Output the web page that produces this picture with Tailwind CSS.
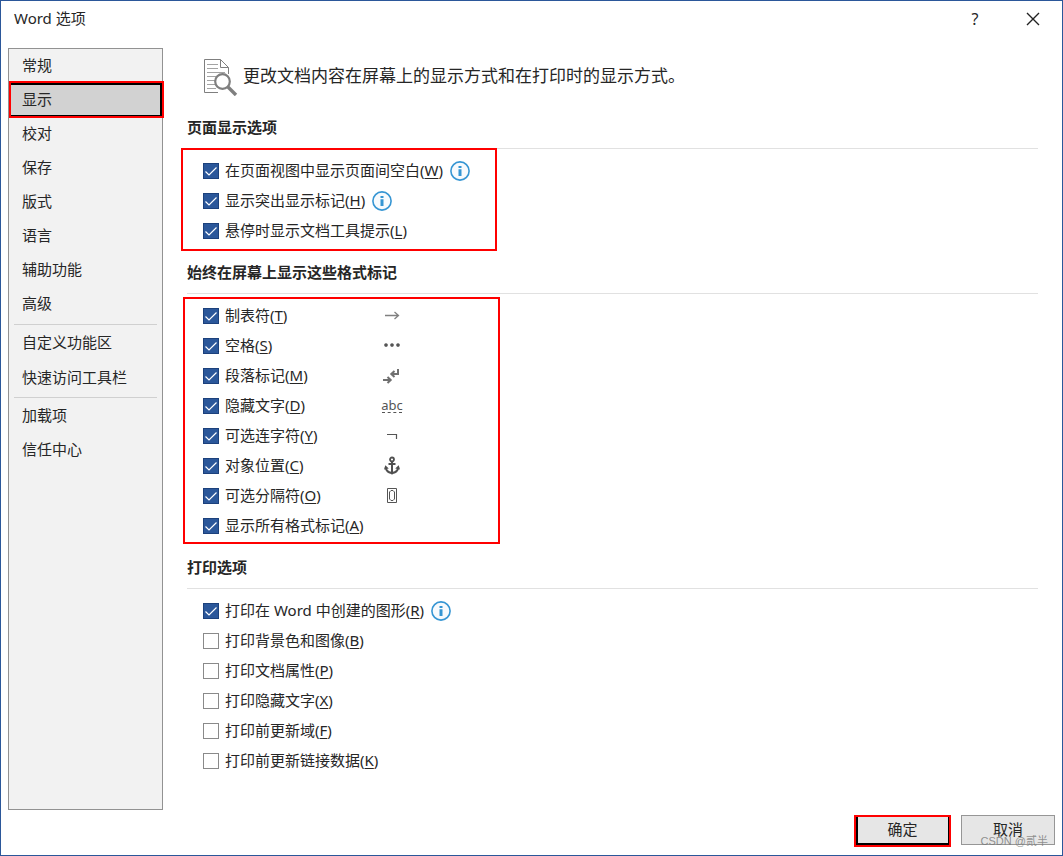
<!DOCTYPE html>
<html lang="zh-CN">

<head>
    <meta charset="UTF-8" />
    <meta name="viewport" content="width=device-width, initial-scale=1.0" />
    <title>Word 选项</title>
    <script src="https://cdn.jsdelivr.net/npm/@tailwindcss/browser@4"></script>
</head>

<body class="min-h-screen flex flex-col bg-white border border-[#2b579a] text-[#262626] text-[15px] leading-5 font-['Noto_Sans','Noto_Sans_CJK_SC',sans-serif]">

    <!-- Shared icons -->
    <svg class="hidden">
        <symbol id="tick" viewBox="0 0 16 16">
            <path d="M2.5 8.5 6 12 13.5 4.5" fill="none" stroke="#fff" stroke-width="1.2" />
        </symbol>
        <symbol id="info" viewBox="0 0 20 20">
            <circle cx="10" cy="10" r="9.1" fill="#f7fafd" stroke="#3595d3" stroke-width="1.6" />
            <path d="M8.5 5h3v2h-3zM8.5 8.2h3V15h-3z" fill="#3595d3" />
        </symbol>
        <symbol id="mark-tab" viewBox="0 0 20 20">
            <path d="M3 9.5h13.5M12.5 6l4 3.5-4 3.5" fill="none" stroke="#808080" stroke-width="1.3" />
        </symbol>
        <symbol id="mark-space" viewBox="0 0 20 20">
            <path d="M4 7.2a1.8 1.8 0 1 0 .01 0zM10 7.2a1.8 1.8 0 1 0 .01 0zM16 7.2a1.8 1.8 0 1 0 .01 0z" fill="#555" />
        </symbol>
        <symbol id="mark-paragraph" viewBox="0 0 20 20">
            <path d="M16 3v5H9.5M12.5 5 9.3 8l3.200 3M1 14h7.500M5.500 11l3.200 3-3.200 3" fill="none" stroke="#707070" stroke-width="2" />
        </symbol>
        <symbol id="mark-hyphen" viewBox="0 0 20 20">
            <path d="M5 8.5h9.5V13" fill="none" stroke="#555" stroke-width="1.2" />
        </symbol>
        <symbol id="mark-anchor" viewBox="0 0 20 20">
            <circle cx="10" cy="3.500" r="2" fill="none" stroke="#505050" stroke-width="1.800" />
            <path d="M10 5.500V17M6.500 8h7M3.700 11.500c.5 3.200 3 5.300 6.300 5.300s5.800-2.100 6.300-5.300" fill="none" stroke="#505050" stroke-width="2" />
            <path d="M2 13.500 3.300 9.300 6.800 12.600zM18 13.500 16.700 9.300 13.200 12.600zM7 16.200 10 18.800 13 16.200z" fill="#505050" />
        </symbol>
        <symbol id="mark-break" viewBox="0 0 20 20">
            <path d="M5.500 2.500h9v14h-9zM9 4.500h2l1.500 1.500v7L11 14.500H9L7.500 13V6z" fill="none" stroke="#555" />
        </symbol>
    </svg>

    <!-- Title bar -->
    <header class="h-[47px] flex justify-between items-start pl-[13px] pr-[21px] pt-[7px]">
        <h1>Word 选项</h1>
        <div class="flex items-center gap-11">
            <button type="button" aria-label="帮助" class="w-3 text-base leading-5">?</button>
            <button type="button" aria-label="关闭" class="w-4 h-[22px] flex items-center">
                <svg class="w-4 h-4" viewBox="0 0 16 16" fill="none" stroke="#222" stroke-width="1.4">
                    <path d="M2 2 14 14M14 2 2 14" />
                </svg>
            </button>
        </div>
    </header>

    <div class="flex-1 flex pl-[7px] pr-6">

        <!-- Categories -->
        <nav class="w-[155px] shrink-0 bg-[#f2f2f2] border border-[#929292]">
            <ul>
                <li><button type="button" class="w-full h-[34px] pl-[13px] pb-0.5 text-left">常规</button></li>
                <li class="relative">
                    <button type="button" class="w-full h-[34px] pl-[13px] pb-0.5 text-left bg-[#d2d2d2] border-y-2 border-r-2 border-black">显示</button>
                    <span class="absolute -top-0.5 -bottom-px left-0 -right-0.5 border-2 border-[#f00] pointer-events-none"></span>
                </li>
                <li><button type="button" class="w-full h-[34px] pl-[13px] pb-0.5 text-left">校对</button></li>
                <li><button type="button" class="w-full h-[34px] pl-[13px] pb-0.5 text-left">保存</button></li>
                <li><button type="button" class="w-full h-[34px] pl-[13px] pb-0.5 text-left">版式</button></li>
                <li><button type="button" class="w-full h-[34px] pl-[13px] pb-0.5 text-left">语言</button></li>
                <li><button type="button" class="w-full h-[34px] pl-[13px] pb-0.5 text-left">辅助功能</button></li>
                <li><button type="button" class="w-full h-[34px] pl-[13px] pb-0.5 text-left">高级</button></li>
            </ul>
            <hr class="mx-[5px] mt-[3px] border-[#d0d0d0]" />
            <ul>
                <li><button type="button" class="w-full h-[35px] pl-[13px] pb-0.5 text-left">自定义功能区</button></li>
                <li><button type="button" class="w-full h-[34px] pl-[13px] text-left">快速访问工具栏</button></li>
            </ul>
            <hr class="mx-[5px] mt-[3px] border-[#d0d0d0]" />
            <ul>
                <li><button type="button" class="w-full h-[35px] pl-[13px] pb-0.5 text-left">加载项</button></li>
                <li><button type="button" class="w-full h-[34px] pl-[13px] pb-0.5 text-left">信任中心</button></li>
            </ul>
        </nav>

        <!-- Options -->
        <main class="flex-1 pl-6">
            <div class="flex items-center pt-[10px] pl-[17px] gap-1">
                <svg class="w-[35px] h-[38px]" viewBox="0 0 35 38" fill="none">
                    <path d="M14 34.500H.5V1.500h16l8 8V16M16.500 1.500v8h8" stroke="#7f7f7f" />
                    <path d="M3 6.500h11M3 10.500h11M3 14.500h18M3 18.500h9M3 22.500h8M3 26.500h8M3 30.500h9" stroke="#a3a3a3" />
                    <circle cx="18.500" cy="23.500" r="7.300" fill="#fff" stroke="#7f7f7f" stroke-width="2.200" />
                    <path d="m24 29 8 8" stroke="#7f7f7f" stroke-width="3.400" />
                </svg>
                <p class="pb-0.5 text-[17px] leading-6">更改文档内容在屏幕上的显示方式和在打印时的显示方式。</p>
            </div>

            <section class="mt-[21px]">
                <h2 class="h-8 font-bold border-b border-[#e1e1e1]">页面显示选项</h2>
                <ul id="page-options" class="relative w-[316px] -ml-1.5 -mt-px pl-5 pt-1.5 pb-[3px] border-2 border-[#f00]"></ul>
            </section>

            <section class="mt-[11px]">
                <h2 class="h-8 font-bold border-b border-[#e1e1e1]">始终在屏幕上显示这些格式标记</h2>
                <ul id="mark-options" class="w-[317px] -ml-1 mt-[3px] pl-[18px] pt-0.5 pb-px border-2 border-[#f00]"></ul>
            </section>

            <section class="mt-[13px]">
                <h2 class="h-8 font-bold border-b border-[#e1e1e1]">打印选项</h2>
                <ul id="print-options" class="mt-[7px] pl-4"></ul>
            </section>
        </main>
    </div>

    <!-- Buttons -->
    <footer class="relative flex justify-end items-start gap-[10px] pt-[5px] pr-[7px] pb-2">
        <button type="button" class="w-[97px] h-8 pb-1 bg-[#e6e6e6] border-2 border-[#f00] shadow-[inset_2px_-2px_0_#000,inset_-1px_0_0_#000]">确定</button>
        <button type="button" class="w-[94px] h-[30px] pb-0.5 bg-[#e6e6e6] border border-[#969696]">取消</button>
        <span class="absolute right-[14px] bottom-1.5 text-[11px] leading-4 text-[#777]/80 font-['Liberation_Sans','Noto_Sans_CJK_SC',sans-serif] pointer-events-none">CSDN @贰半</span>
    </footer>

    <script>
        const pageOptions = [
            { text: '在页面视图中显示页面间空白', key: 'W', checked: true, info: true },
            { text: '显示突出显示标记', key: 'H', checked: true, info: true },
            { text: '悬停时显示文档工具提示', key: 'L', checked: true },
        ];

        const markOptions = [
            { text: '制表符', key: 'T', checked: true, icon: 'mark-tab' },
            { text: '空格', key: 'S', checked: true, icon: 'mark-space' },
            { text: '段落标记', key: 'M', checked: true, icon: 'mark-paragraph' },
            { text: '隐藏文字', key: 'D', checked: true, sample: 'abc' },
            { text: '可选连字符', key: 'Y', checked: true, icon: 'mark-hyphen' },
            { text: '对象位置', key: 'C', checked: true, icon: 'mark-anchor' },
            { text: '可选分隔符', key: 'O', checked: true, icon: 'mark-break' },
            { text: '显示所有格式标记', key: 'A', checked: true },
        ];

        const printOptions = [
            { text: '打印在 Word 中创建的图形', key: 'R', checked: true, info: true },
            { text: '打印背景色和图像', key: 'B' },
            { text: '打印文档属性', key: 'P' },
            { text: '打印隐藏文字', key: 'X' },
            { text: '打印前更新域', key: 'F' },
            { text: '打印前更新链接数据', key: 'K' },
        ];

        function renderOptions(id, options) {
            document.getElementById(id).innerHTML = options.map(o => {
                let extra = '';
                if (o.info) extra = '<svg class="w-5 h-5 ml-[7px]"><use href="#info" /></svg>';
                if (o.icon) extra = `<svg class="w-5 h-5"><use href="#${o.icon}" /></svg>`;
                if (o.sample) extra = `<span class="w-5 h-[14px] flex justify-center text-[13px] leading-3 text-[#555] border-b border-dashed border-[#555]">${o.sample}</span>`;

                return `
                    <li class="h-[30px] flex items-center">
                        <label for="opt-${o.key}" class="${o.icon || o.sample ? 'w-[179px] flex items-center gap-1.5' : 'flex items-center gap-1.5'}">
                            <span class="relative w-4 h-4">
                                <input type="checkbox" id="opt-${o.key}" ${o.checked ? 'checked' : ''} class="peer block appearance-none w-4 h-4 border border-[#8a8a8a] checked:border-[#1c417c] checked:bg-[#2b579a]" />
                                <svg class="absolute inset-0 w-4 h-4 hidden peer-checked:block pointer-events-none"><use href="#tick" /></svg>
                            </span>
                            <span class="pb-0.5">${o.text}(<u class="underline-offset-2">${o.key}</u>)</span>
                        </label>
                        ${extra}
                    </li>`;
            }).join('');
        }

        renderOptions('page-options', pageOptions);
        renderOptions('mark-options', markOptions);
        renderOptions('print-options', printOptions);
    </script>

</body>

</html>
